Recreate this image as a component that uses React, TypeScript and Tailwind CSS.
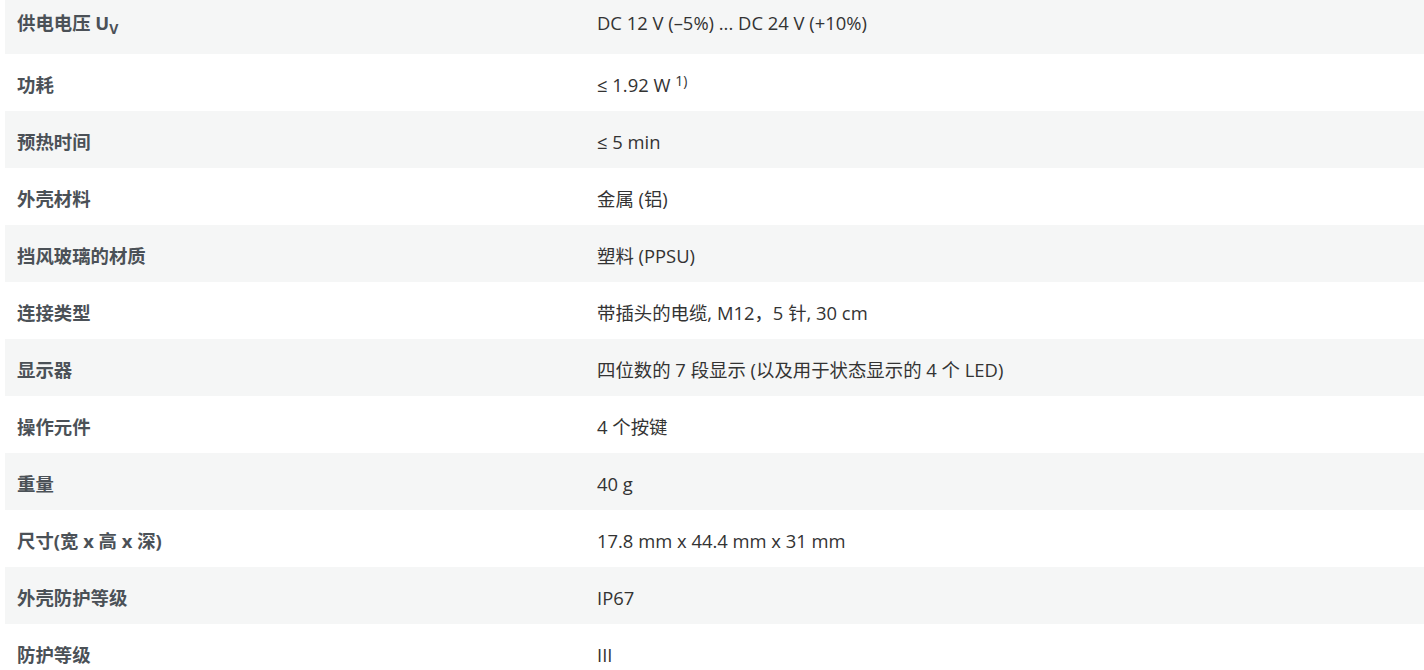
const ROWS: { label: React.ReactNode; value: React.ReactNode }[] = [
  {
    label: (
      <>
        供电电压 U<sub className="text-[14px] relative top-[4px] align-baseline">V</sub>
      </>
    ),
    value: "DC 12 V (–5%) ... DC 24 V (+10%)",
  },
  {
    label: "功耗",
    value: (
      <>
        ≤ 1.92 W <sup className="text-[14px] relative -top-[6px] align-baseline">1)</sup>
      </>
    ),
  },
  { label: "预热时间", value: "≤ 5 min" },
  { label: "外壳材料", value: "金属 (铝)" },
  { label: "挡风玻璃的材质", value: "塑料 (PPSU)" },
  { label: "连接类型", value: "带插头的电缆, M12，5 针, 30 cm" },
  { label: "显示器", value: "四位数的 7 段显示 (以及用于状态显示的 4 个 LED)" },
  { label: "操作元件", value: "4 个按键" },
  { label: "重量", value: "40 g" },
  { label: "尺寸(宽 x 高 x 深)", value: "17.8 mm x 44.4 mm x 31 mm" },
  { label: "外壳防护等级", value: "IP67" },
  { label: "防护等级", value: "III" },
];

export default function App() {
  return (
    <div
      className="w-[1424px] h-[670px] overflow-hidden bg-white"
      style={{ fontFamily: '"Open Sans", "Noto Sans CJK SC", sans-serif' }}
    >
      {/* spec table, page scrolled a few px */}
      <div className="-mt-[8px] pl-[5px]">
        {ROWS.map((row, i) => (
          <div
            key={i}
            className={`flex items-baseline pt-[18px] ${i === 0 ? "pb-[18px]" : "pb-[13px]"} ${
              i % 2 === 0 ? "bg-[#f5f6f6]" : "bg-white"
            }`}
          >
            <div className="w-[580px] shrink-0 pl-[12px] text-[18.4px] leading-[26px] font-bold text-[#4b5157]">
              {row.label}
            </div>
            <div className="pl-[12px] text-[18.4px] leading-[26px] text-[#333333]">{row.value}</div>
          </div>
        ))}
      </div>
    </div>
  );
}
